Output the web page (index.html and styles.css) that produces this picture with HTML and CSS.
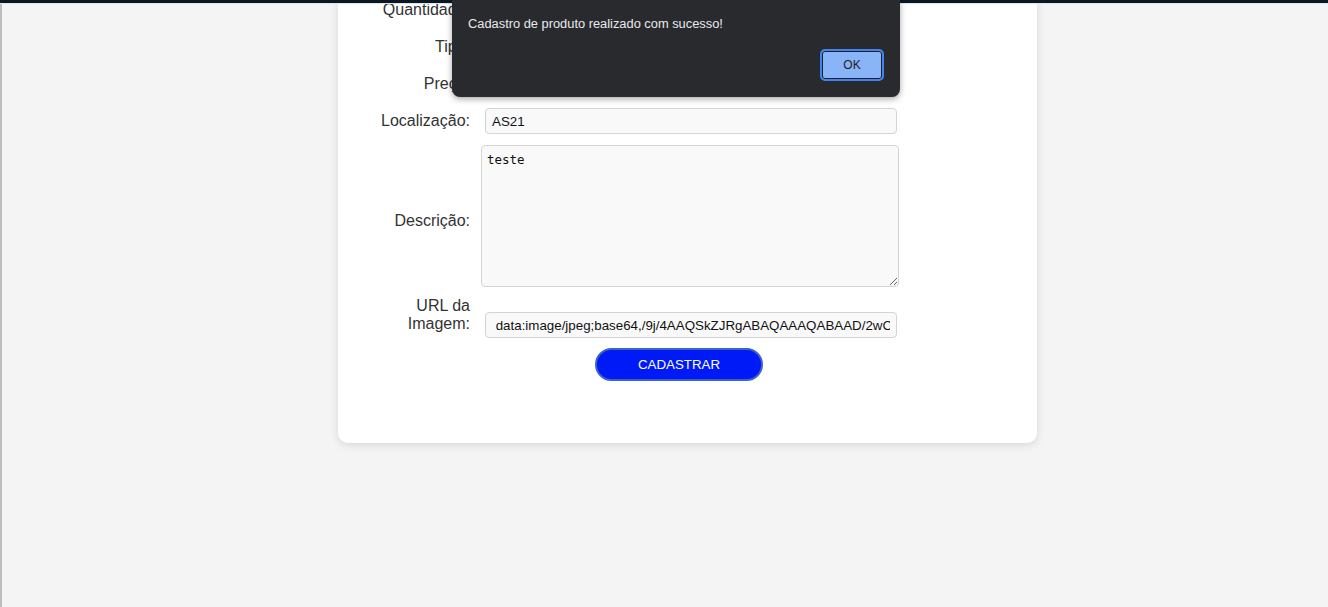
FILE: index.html
```html
<!DOCTYPE html>
<html lang="pt-BR">
<head>
<meta charset="utf-8">
<title>Cadastro de Produto</title>
<link rel="stylesheet" href="styles.css">
</head>
<body>
<div class="topbar"></div>
<div class="page">
  <main class="card">
    <form class="form">
      <div class="row">
        <label class="lbl">Quantidade:</label>
        <div class="field"><input class="inp" type="text" value="10"></div>
      </div>
      <div class="row">
        <label class="lbl">Tipo:</label>
        <div class="field"><input class="inp" type="text" value="Eletrônico"></div>
      </div>
      <div class="row">
        <label class="lbl">Preço:</label>
        <div class="field"><input class="inp" type="text" value="100"></div>
      </div>
      <div class="row">
        <label class="lbl">Localização:</label>
        <div class="field"><input class="inp" type="text" value="AS21"></div>
      </div>
      <div class="row row-area">
        <label class="lbl lbl-area">Descrição:</label>
        <div class="field field-area"><textarea class="txt">teste</textarea></div>
      </div>
      <div class="row row-top">
        <label class="lbl">URL da Imagem:</label>
        <div class="field"><input class="inp inp-url" type="text" value=" data:image/jpeg;base64,/9j/4AAQSkZJRgABAQAAAQABAAD/2wCEAAkGBxMTEhUTEhMWFhUXGBgYGBcYGBgYGBgYGBgXFxgYGBgYHSggGBolHRgXITEhJSkrLi4uFx8zODMtNygtLisBCgoKDg0OGhAQGi0lHyUtLS0t"></div>
      </div>
      <div class="actions">
        <button class="btn" type="button">CADASTRAR</button>
      </div>
    </form>
  </main>
</div>
<div class="dialog">
  <p class="dialog-msg">Cadastro de produto realizado com sucesso!</p>
  <div class="dialog-actions">
    <button class="dialog-ok" type="button">OK</button>
  </div>
</div>
</body>
</html>
```
FILE: styles.css
```css
html, body {
  margin: 0;
  padding: 0;
  height: 100%;
  overflow: hidden;
}
body {
  background: #f4f4f4;
  font-family: "Liberation Sans", Arial, sans-serif;
  color: #333;
}
.topbar {
  position: relative;
  z-index: 2;
  height: 3px;
  background: #0b1821;
  border-bottom: 1px solid #dbe6ee;
}
.page {
  border-left: 2px solid #bdbdbd;
  height: 100%;
  box-sizing: border-box;
  padding-left: 336px;
}
.card {
  width: 699px;
  box-sizing: border-box;
  background: #fff;
  border-radius: 0 0 10px 10px;
  box-shadow: 0 2px 8px rgba(0, 0, 0, 0.12);
  padding: 0 0 62px 32px;
  margin-top: -4px;
}
.form {
  display: flex;
  flex-direction: column;
}
.row {
  display: flex;
  align-items: center;
  gap: 11px;
  margin-bottom: 11px;
}
.row:first-child {
  margin-top: -3px;
}
.row-area {
  margin-bottom: 6px;
}
.row-top {
  align-items: flex-start;
  margin-bottom: 10px;
}
.lbl {
  width: 100px;
  flex: none;
  text-align: right;
  font-size: 16px;
  line-height: 18.4px;
  color: #333;
}
.lbl-area {
  padding-top: 6px;
}
.field {
  width: 418px;
  flex: none;
  display: flex;
}
.field-area {
  padding-bottom: 4px;
}
.inp {
  width: 412px;
  height: 26px;
  box-sizing: border-box;
  margin-left: 4px;
  padding: 0 6px;
  border: 1px solid #d4d4d4;
  border-radius: 4px;
  background: #f9f9f9;
  font-family: "Liberation Sans", Arial, sans-serif;
  font-size: 13.333px;
  color: #111;
}
.inp-url {
  margin-top: 15px;
}
.txt {
  width: 418px;
  height: 142px;
  box-sizing: border-box;
  padding: 6px 5px 5px;
  border: 1px solid #d4d4d4;
  border-radius: 4px;
  background: #f9f9f9;
  font-family: "DejaVu Sans Mono", "Liberation Mono", monospace;
  font-size: 12.5px;
  color: #111;
}
.actions {
  display: flex;
  padding-left: 225px;
}
.btn {
  width: 168px;
  height: 33px;
  box-sizing: border-box;
  border: 2px solid #3a62c8;
  border-radius: 17px;
  background: #0019f7;
  color: #fff;
  font-family: "Liberation Sans", Arial, sans-serif;
  font-size: 13.333px;
  padding-top: 1px;
}
.dialog {
  position: absolute;
  z-index: 3;
  top: 0;
  left: 452px;
  width: 448px;
  height: 97px;
  box-sizing: border-box;
  background: #292a2d;
  border-radius: 0 0 8px 8px;
  box-shadow: 0 2px 6px rgba(0, 0, 0, 0.35);
  padding: 16px 16px 0 16px;
  display: flex;
  flex-direction: column;
}
.dialog-msg {
  margin: 0;
  font-family: "Liberation Sans", Arial, sans-serif;
  font-size: 12.85px;
  line-height: 16px;
  color: #e8eaed;
}
.dialog-actions {
  display: flex;
  justify-content: flex-end;
  margin-top: 17px;
}
.dialog-ok {
  width: 64px;
  height: 32px;
  box-sizing: border-box;
  border: 2px solid #3f84f0;
  border-radius: 5px;
  box-shadow: inset 0 0 0 1px #202124;
  background: #8ab4f8;
  color: #202124;
  font-family: "Liberation Sans", Arial, sans-serif;
  font-size: 12px;
}
```
